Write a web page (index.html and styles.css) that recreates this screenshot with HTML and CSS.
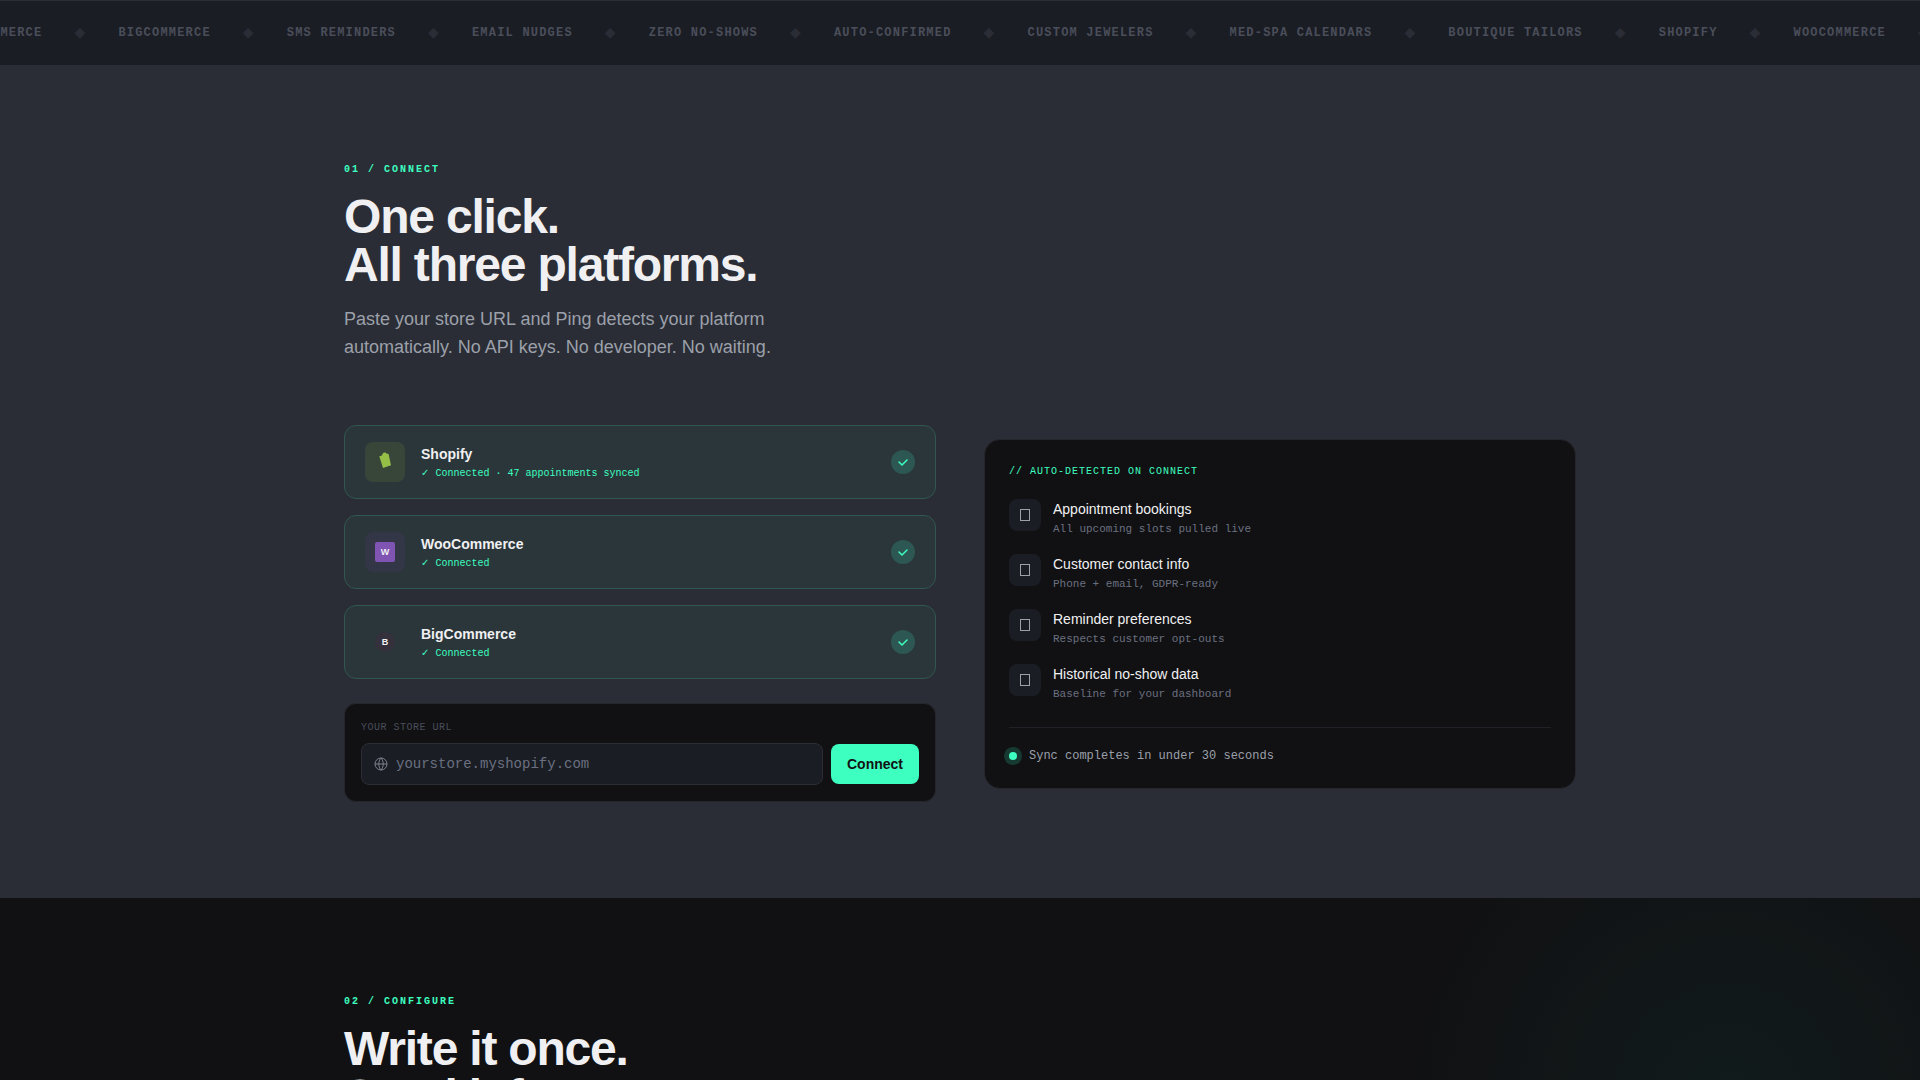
FILE: index.html
```
<!DOCTYPE html>
<html lang="en">
<head>
  <meta charset="UTF-8" />
  <meta name="viewport" content="width=device-width, initial-scale=1.0"/>
  <title>Ping</title>
  <link rel="stylesheet" href="styles.css">
</head>
<body>
  <div class="ticker">
    <div class="ticker-track">
      <span>WooCommerce</span><i>◆</i>
      <span>BigCommerce</span><i>◆</i>
      <span>SMS Reminders</span><i>◆</i>
      <span>Email Nudges</span><i>◆</i>
      <span>Zero No-Shows</span><i>◆</i>
      <span>Auto-Confirmed</span><i>◆</i>
      <span>Custom Jewelers</span><i>◆</i>
      <span>Med-Spa Calendars</span><i>◆</i>
      <span>Boutique Tailors</span><i>◆</i>
      <span>Shopify</span><i>◆</i>
      <span>WooCommerce</span><i>◆</i>
    </div>
  </div>

  <section class="section connect">
    <div class="container">
      <header class="section-head">
        <p class="eyebrow">01 / CONNECT</p>
        <h2>One click.<br>All three platforms.</h2>
        <p class="lead">Paste your store URL and Ping detects your platform automatically. No API keys. No developer. No waiting.</p>
      </header>

      <div class="columns">
        <div>
          <ul class="platforms">
            <li class="platform">
              <div class="logo shopify">
                <svg width="20" height="20" viewBox="0 0 20 20"><path d="M4.300 4.200l2.700-.8C7.300 1.600 8.400.6 9.600.5c.9-.2 1.500.2 1.800 1l2.200.5 2.400 11.200L8 16z" fill="#96bf48"/></svg>
              </div>
              <div class="platform-text">
                <h3>Shopify</h3>
                <p>✓ Connected · 47 appointments synced</p>
              </div>
              <div class="check"><svg width="12" height="12" viewBox="0 0 12 12"><path d="M2 6l3 3 5-5"/></svg></div>
            </li>
            <li class="platform">
              <div class="logo woo"><span>W</span></div>
              <div class="platform-text">
                <h3>WooCommerce</h3>
                <p>✓ Connected</p>
              </div>
              <div class="check"><svg width="12" height="12" viewBox="0 0 12 12"><path d="M2 6l3 3 5-5"/></svg></div>
            </li>
            <li class="platform">
              <div class="logo big"><span>B</span></div>
              <div class="platform-text">
                <h3>BigCommerce</h3>
                <p>✓ Connected</p>
              </div>
              <div class="check"><svg width="12" height="12" viewBox="0 0 12 12"><path d="M2 6l3 3 5-5"/></svg></div>
            </li>
          </ul>

          <form class="store-form">
            <label for="storeUrl">YOUR STORE URL</label>
            <div class="store-row">
              <div class="store-field">
                <svg width="14" height="14" viewBox="0 0 14 14"><circle cx="7" cy="7" r="6"/><path d="M1 7h12M7 1c3 3.500 3 8.500 0 12M7 1c-3 3.500-3 8.500 0 12"/></svg>
                <input type="text" id="storeUrl" placeholder="yourstore.myshopify.com">
              </div>
              <button type="button">Connect</button>
            </div>
          </form>
        </div>

        <div class="detected">
          <p class="detected-title">// AUTO-DETECTED ON CONNECT</p>
          <ul>
            <li>
              <div class="tile"><span></span></div>
              <div><h4>Appointment bookings</h4><p>All upcoming slots pulled live</p></div>
            </li>
            <li>
              <div class="tile"><span></span></div>
              <div><h4>Customer contact info</h4><p>Phone + email, GDPR-ready</p></div>
            </li>
            <li>
              <div class="tile"><span></span></div>
              <div><h4>Reminder preferences</h4><p>Respects customer opt-outs</p></div>
            </li>
            <li>
              <div class="tile"><span></span></div>
              <div><h4>Historical no-show data</h4><p>Baseline for your dashboard</p></div>
            </li>
          </ul>
          <div class="sync"><span class="pulse"></span>Sync completes in under 30 seconds</div>
        </div>
      </div>
    </div>
  </section>

  <section class="section configure">
    <div class="container">
      <header class="section-head">
        <p class="eyebrow">02 / CONFIGURE</p>
        <h2>Write it once.<br>Send it forever.</h2>
      </header>
    </div>
  </section>
</body>
</html>
```

FILE: styles.css
```
* {
  box-sizing: border-box;
  margin: 0;
  padding: 0;
}

:root {
  --mint: #3dffc0;
  --ink: #111113;
  --panel: #1a1d24;
  --slate: #2a2d35;
  --mono: "Liberation Mono", "DejaVu Sans", monospace;
}

body {
  font-family: "Liberation Sans", Arial, sans-serif;
  background: var(--ink);
  color: #f0f0f2;
}

ul {
  list-style: none;
}

/* ticker */
.ticker {
  background: var(--panel);
  border-top: 1px solid var(--slate);
  border-bottom: 1px solid var(--slate);
  overflow: hidden;
  padding: 20px 0;
}

.ticker-track {
  display: flex;
  align-items: center;
  gap: 32px;
  height: 24px;
  margin-left: -50px; /* loop starts mid-word */
  font: bold 12px/24px var(--mono);
  letter-spacing: 0.1em;
  text-transform: uppercase;
  white-space: nowrap;
  color: #4a4e5a;
}

.ticker-track i {
  font-size: 14px;
  font-style: normal;
  color: var(--slate);
}

/* sections */
.section {
  padding: 96px 0;
}

.connect {
  background: var(--slate);
}

.configure {
  background: radial-gradient(circle 320px at 90% 200px, #111b1c, var(--ink));
}

.container {
  max-width: 1280px;
  margin: 0 auto;
  padding: 0 24px;
}

.section-head {
  margin-bottom: 64px;
}

.eyebrow {
  font: bold 10px/15px var(--mono);
  letter-spacing: 0.2em;
  color: var(--mint);
  margin-bottom: 16px;
}

h2 {
  font-size: 48px;
  line-height: 48px;
  letter-spacing: -0.025em;
}

.lead {
  max-width: 448px;
  margin-top: 16px;
  font-size: 18px;
  line-height: 28px;
  color: #9ca0aa;
}

.columns {
  display: grid;
  grid-template-columns: 1fr 1fr;
  gap: 48px;
  align-items: center;
}

/* platform cards */
.platforms {
  display: flex;
  flex-direction: column;
  gap: 16px;
}

.platform {
  display: flex;
  align-items: center;
  gap: 16px;
  padding: 16px 20px;
  border: 1px solid #315750;
  border-radius: 12px;
  background: #2b363a;
}

.logo {
  display: flex;
  align-items: center;
  justify-content: center;
  width: 40px;
  height: 40px;
  border-radius: 8px;
}

.logo span {
  width: 20px;
  font-size: 9px;
  font-weight: bold;
  line-height: 20px;
  text-align: center;
}

.shopify {
  background: #38463a;
}

.woo {
  background: #323646;
}

.woo span {
  background: #7f54b3;
  border-radius: 2px;
}

.big span {
  background: #34313d;
  border-radius: 50%;
}

.platform-text {
  flex: 1;
}

.platform h3 {
  font-size: 14px;
  line-height: 24px;
}

.platform p {
  height: 16px;
  font: 10px/16px var(--mono);
  color: var(--mint);
}

.check {
  display: flex;
  align-items: center;
  justify-content: center;
  width: 24px;
  height: 24px;
  border-radius: 50%;
  background: #2d5752;
}

.check path {
  fill: none;
  stroke: var(--mint);
  stroke-width: 1.5;
  stroke-linecap: round;
  stroke-linejoin: round;
}

/* store url */
.store-form {
  margin-top: 24px;
  padding: 16px;
  border: 1px solid #25262b;
  border-radius: 12px;
  background: var(--ink);
}

.store-form label {
  display: block;
  margin-bottom: 8px;
  font: 10px/15px var(--mono);
  letter-spacing: 0.05em;
  color: #4a4e5a;
}

.store-row {
  display: flex;
  align-items: center;
  gap: 8px;
}

.store-field {
  flex: 1;
  display: flex;
  align-items: center;
  gap: 8px;
  height: 42px;
  padding: 0 12px;
  border: 1px solid var(--slate);
  border-radius: 8px;
  background: var(--panel);
}

.store-field svg {
  fill: none;
  stroke: #7d828f;
}

.store-field input {
  flex: 1;
  border: 0;
  outline: 0;
  background: none;
  font: 14px/20px var(--mono);
  color: #f0f0f2;
}

.store-field input::placeholder {
  color: #6b7080;
}

.store-form button {
  height: 40px;
  padding: 0 16px;
  border: 0;
  border-radius: 8px;
  background: var(--mint);
  color: var(--ink);
  font: bold 14px/20px "Liberation Sans", Arial, sans-serif;
  cursor: pointer;
}

/* detected panel */
.detected {
  padding: 24px;
  border: 1px solid #25262b;
  border-radius: 16px;
  background: var(--ink);
}

.detected-title {
  margin-bottom: 20px;
  font: 10px/15px var(--mono);
  letter-spacing: 0.1em;
  color: var(--mint);
}

.detected ul {
  display: flex;
  flex-direction: column;
  gap: 16px;
}

.detected li {
  display: flex;
  align-items: flex-start;
  gap: 12px;
}

.tile {
  display: flex;
  align-items: center;
  justify-content: center;
  width: 32px;
  height: 32px;
  border-radius: 8px;
  background: var(--panel);
}

.tile span {
  width: 10px;
  height: 12px;
  border: 1px solid #9ca0aa;
}

.detected h4 {
  font-size: 14px;
  font-weight: normal;
  line-height: 20px;
}

.detected li p {
  margin-top: 2px;
  font: 11px/17px var(--mono);
  color: #6b7080;
}

.sync {
  display: flex;
  align-items: center;
  gap: 12px;
  margin-top: 24px;
  padding-top: 20px;
  border-top: 1px solid #1f2126;
  font: 12px/16px var(--mono);
  color: #9ca0aa;
}

.pulse {
  width: 8px;
  height: 8px;
  border-radius: 50%;
  background: var(--mint);
  box-shadow: 0 0 0 5px #163a31;
}
```
